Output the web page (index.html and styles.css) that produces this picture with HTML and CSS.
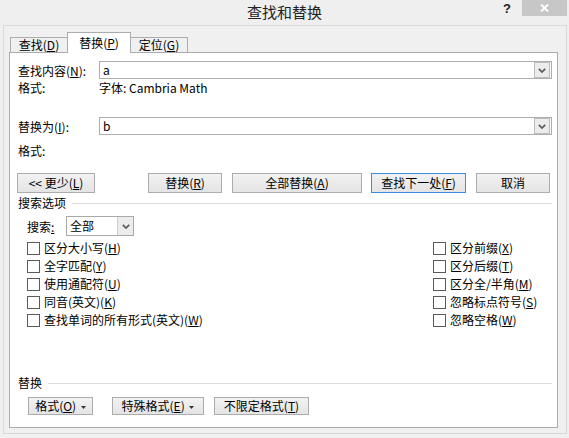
FILE: index.html
```html
<!DOCTYPE html>
<html lang="zh-CN">
<head>
<meta charset="utf-8">
<title>查找和替换</title>
<link rel="stylesheet" href="styles.css">
</head>
<body>
<div class="titlebar">
  <div class="tb-side"></div>
  <div class="title">查找和替换</div>
  <div class="tb-side tb-right">
    <span class="help">?</span>
    <span class="close"><svg width="9" height="8" viewBox="0 0 9 8"><path d="M1 0.5 L8 7.5 M8 0.5 L1 7.5" stroke="#fff" stroke-width="1.8" fill="none"/></svg></span>
  </div>
</div>
<div class="frame">
  <div class="tabs">
    <div class="tab t1">查找(<u>D</u>)</div>
    <div class="tab t2 active">替换(<u>P</u>)</div>
    <div class="tab t3">定位(<u>G</u>)</div>
  </div>
  <div class="panel">
    <div class="field f1">
      <span class="lbl">查找内容(<u>N</u>):</span>
      <div class="combo"><span class="val">a</span><span class="ddbtn"><svg width="8" height="5" viewBox="0 0 8 5"><path d="M0.8 0.8 L4 4 L7.2 0.8" stroke="#5a5a5a" stroke-width="1.7" fill="none"/></svg></span></div>
    </div>
    <div class="fmt f1fmt"><span class="lbl">格式:</span><span>字体: Cambria Math</span></div>
    <div class="field f2">
      <span class="lbl">替换为(<u>I</u>):</span>
      <div class="combo"><span class="val">b</span><span class="ddbtn"><svg width="8" height="5" viewBox="0 0 8 5"><path d="M0.8 0.8 L4 4 L7.2 0.8" stroke="#5a5a5a" stroke-width="1.7" fill="none"/></svg></span></div>
    </div>
    <div class="fmt f2fmt"><span class="lbl">格式:</span></div>
    <div class="btnrow">
      <button class="btn b-less">&lt;&lt; 更少(<u>L</u>)</button>
      <button class="btn b-rep">替换(<u>R</u>)</button>
      <button class="btn b-all">全部替换(<u>A</u>)</button>
      <button class="btn b-next default">查找下一处(<u>F</u>)</button>
      <button class="btn b-cancel">取消</button>
    </div>
    <div class="section s-search"><span>搜索选项</span><span class="rule"></span></div>
    <div class="searchrow">
      <span class="slbl">搜索<u>:</u></span>
      <div class="select"><span class="val">全部</span><span class="ddbtn"><svg width="8" height="5" viewBox="0 0 8 5"><path d="M0.8 0.8 L4 4 L7.2 0.8" stroke="#5a5a5a" stroke-width="1.7" fill="none"/></svg></span></div>
    </div>
    <div class="checks">
      <div class="chk"><span class="box"></span>区分大小写(<u>H</u>)</div>
      <div class="chk"><span class="box"></span>全字匹配(<u>Y</u>)</div>
      <div class="chk"><span class="box"></span>使用通配符(<u>U</u>)</div>
      <div class="chk"><span class="box"></span>同音(英文)(<u>K</u>)</div>
      <div class="chk"><span class="box"></span>查找单词的所有形式(英文)(<u>W</u>)</div>
      <div class="chk"><span class="box"></span>区分前缀(<u>X</u>)</div>
      <div class="chk"><span class="box"></span>区分后缀(<u>T</u>)</div>
      <div class="chk"><span class="box"></span>区分全/半角(<u>M</u>)</div>
      <div class="chk"><span class="box"></span>忽略标点符号(<u>S</u>)</div>
      <div class="chk"><span class="box"></span>忽略空格(<u>W</u>)</div>
    </div>
    <div class="section s-replace"><span>替换</span><span class="rule"></span></div>
    <div class="btnrow2">
      <button class="btn b-fmt">格式(<u>O</u>) <svg class="tri" width="5" height="3" viewBox="0 0 5 3"><path d="M0 0 H5 L2.5 3 Z" fill="#333"/></svg></button>
      <button class="btn b-spec">特殊格式(<u>E</u>) <svg class="tri" width="5" height="3" viewBox="0 0 5 3"><path d="M0 0 H5 L2.5 3 Z" fill="#333"/></svg></button>
      <button class="btn b-nofmt">不限定格式(<u>T</u>)</button>
    </div>
  </div>
</div>
</body>
</html>
```
FILE: styles.css
```css
* { box-sizing: border-box; }
html, body { margin: 0; padding: 0; }
body {
  width: 569px;
  height: 438px;
  background: #f0f0f0;
  font-family: "Noto Sans CJK SC", sans-serif;
  font-size: 12px;
  color: #000;
  overflow: hidden;
}
u { text-decoration: underline; text-underline-offset: 1px; }

.titlebar {
  height: 25px;
  display: grid;
  grid-template-columns: 1fr auto 1fr;
  background: #efefef;
}
.title { font-size: 15px; line-height: 23px; color: #222; }
.tb-right { display: flex; justify-content: flex-end; align-items: flex-start; }
.help {
  font-family: "Liberation Sans", sans-serif;
  font-weight: bold;
  font-size: 13px;
  line-height: 13px;
  margin-top: 2px;
  margin-right: 11px;
  color: #222;
}
.close {
  width: 45px;
  height: 16px;
  margin-right: 2px;
  background: #c7c7c7;
  display: flex;
  align-items: center;
  justify-content: center;
}

.frame {
  margin-left: 3px;
  width: 564px;
  height: 409px;
  border: 1px solid #d9d9d9;
  padding-top: 6px;
}
.tabs {
  display: flex;
  align-items: flex-end;
  height: 21px;
  padding-left: 6px;
  margin-bottom: -1px;
}
.tab {
  height: 15px;
  margin-bottom: 1px;
  border: 1px solid #acacac;
  border-bottom: none;
  background: #f0f0f0;
  text-align: center;
  line-height: 14px;
}
.t1 { width: 58px; }
.t2 { width: 64px; margin-left: -1px; }
.t3 { width: 58px; margin-left: -1px; }
.tab.active {
  height: 21px;
  margin-bottom: 0;
  background: #fff;
  line-height: 19px;
  position: relative;
  z-index: 1;
}

.panel {
  margin-left: 5px;
  width: 549px;
  height: 376px;
  border: 1px solid #acacac;
  background: #fff;
  padding: 0 5px 0 8px;
}

.field { display: flex; align-items: center; height: 18px; }
.f1 { margin-top: 8px; }
.f2 { margin-top: 21px; }
.lbl { width: 81px; flex: none; }
.combo {
  flex: 1;
  height: 18px;
  border: 1px solid #abadb3;
  display: flex;
}
.val { flex: 1; padding-left: 3px; line-height: 16px; }
.ddbtn {
  width: 16px;
  margin-right: 1px;
  border: 1px solid #bdbdbd;
  background: #ececec;
  display: flex;
  align-items: center;
  justify-content: center;
}
.fmt { display: flex; height: 16px; line-height: 16px; }
.f1fmt { margin-top: 1px; }
.f2fmt { margin-top: 8px; }

.btnrow { display: flex; margin-top: 14px; margin-left: -1px; }
.btn {
  height: 20px;
  padding: 0;
  border: 1px solid #acacac;
  background: linear-gradient(#f2f2f2, #e4e4e4);
  font-family: inherit;
  font-size: 12px;
  color: #000;
  line-height: 18px;
  text-align: center;
}
.b-less { width: 78px; }
.b-rep { width: 74px; margin-left: 53px; }
.b-all { width: 130px; margin-left: 10px; }
.b-next { width: 95px; margin-left: 9px; }
.b-cancel { width: 74px; margin-left: 10px; }
.btn.default { border-color: #3c8be0; }

.section { display: flex; align-items: center; height: 14px; line-height: 14px; }
.section .rule { flex: 1; height: 1px; background: #dcdcdc; margin-left: 6px; }
.s-search { margin-top: 3px; }
.s-replace { margin-top: 47px; }

.searchrow { display: flex; align-items: center; margin-top: 6px; padding-left: 9px; height: 20px; }
.slbl { width: 39px; flex: none; }
.select {
  width: 68px;
  height: 20px;
  border: 1px solid #a9a9a9;
  display: flex;
}
.select .val { line-height: 18px; }
.select .ddbtn { margin: 0; border-width: 0 0 0 1px; border-color: #cfcfcf; }

.checks {
  display: grid;
  grid-auto-flow: column;
  grid-template-rows: repeat(5, 18px);
  grid-template-columns: 406px 1fr;
  margin-top: 3px;
  padding-left: 9px;
}
.chk { display: flex; align-items: center; line-height: 18px; }
.box {
  width: 13px;
  height: 13px;
  border: 1px solid #5a5a5a;
  background: #fff;
  margin-right: 4px;
  flex: none;
}

.btnrow2 { display: flex; margin-top: 7px; padding-left: 10px; }
.btnrow2 .btn { height: 18px; line-height: 16px; }
.b-fmt { width: 65px; }
.b-spec { width: 92px; margin-left: 19px; }
.b-nofmt { width: 95px; margin-left: 10px; }
.tri { vertical-align: middle; margin-left: 2px; }
```
